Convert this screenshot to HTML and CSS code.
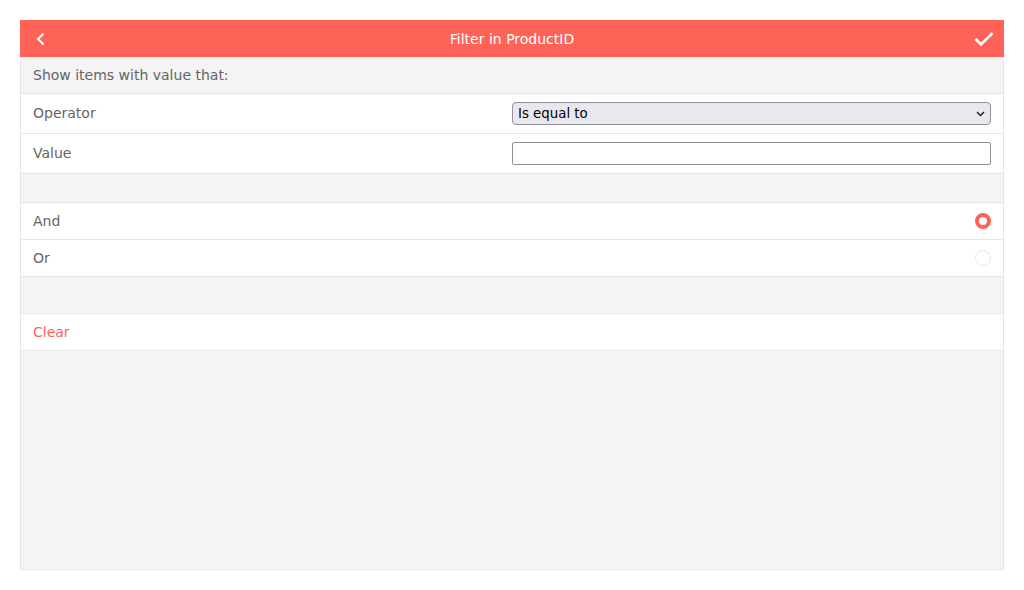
FILE: index.html
```html
<!DOCTYPE html>
<html>
<head>
<meta charset="utf-8">
<link rel="stylesheet" href="styles.css">
</head>
<body>
<div class="panel">
  <div class="header">
    <span class="hbtn back">
      <svg width="16" height="16" viewBox="0 0 16 16"><path d="M10.5 2.5 L5 8 L10.5 13.5" fill="none" stroke="#fff" stroke-width="2"/></svg>
    </span>
    <span class="title">Filter in ProductID</span>
    <span class="hbtn ok">
      <svg width="20" height="16" viewBox="0 0 20 16"><path d="M1.5 8 L7 13.5 L18.5 2" fill="none" stroke="#fff" stroke-width="2.6"/></svg>
    </span>
  </div>
  <div class="section-title">Show items with value that:</div>
  <div class="row field">
    <span class="label">Operator</span>
    <div class="control">
      <div class="select-wrap">
        <select class="select"><option>Is equal to</option></select>
        <svg class="caret" width="9" height="6" viewBox="0 0 9 6"><path d="M1 1 L4.5 4.5 L8 1" fill="none" stroke="#222" stroke-width="1.5"/></svg>
      </div>
    </div>
  </div>
  <div class="row field">
    <span class="label">Value</span>
    <div class="control"><input class="input" type="text"></div>
  </div>
  <div class="spacer small"></div>
  <div class="row">
    <span class="label">And</span>
    <span class="radio checked"></span>
  </div>
  <div class="row">
    <span class="label">Or</span>
    <span class="radio"></span>
  </div>
  <div class="spacer"></div>
  <div class="row">
    <span class="label clear">Clear</span>
  </div>
</div>
</body>
</html>
```

FILE: styles.css
```css
* { box-sizing: border-box; }
html, body { margin: 0; padding: 0; background: #fff; }
body { font-family: "DejaVu Sans", sans-serif; font-size: 14px; color: #656565; }

.panel {
  margin: 20px;
  width: 984px;
  height: 550px;
  border: 1px solid #e6e6e6;
  border-top: 0;
  background: #f4f4f4;
  display: flex;
  flex-direction: column;
}

.header {
  margin: 0 -1px;
  height: 37px;
  background: #ff6358;
  color: #fff;
  display: flex;
  align-items: center;
}
.title { flex: 1; text-align: center; line-height: 37px; padding-top: 1px; }
.hbtn { width: 44px; display: flex; align-items: center; justify-content: center; height: 37px; }
.back { justify-content: flex-start; padding-left: 13px; }
.ok { justify-content: flex-end; padding-right: 10px; }

.section-title {
  height: 37px;
  padding: 0 12px;
  display: flex;
  align-items: center;
  border-bottom: 1px solid #e6e6e6;
  background: #f4f4f4;
}

.row {
  height: 37px;
  padding: 0 12px;
  display: flex;
  align-items: center;
  justify-content: space-between;
  background: #fff;
  border-bottom: 1px solid #e6e6e6;
}
.row.field {
  height: 40px;
  display: grid;
  grid-template-columns: 1fr 1fr;
  align-items: center;
}
.row.field .label { margin-bottom: 2px; }
.control { padding-left: 3px; }

.spacer { height: 37px; border-bottom: 1px solid #e6e6e6; }
.spacer.small { height: 29px; }

.select-wrap { position: relative; width: 479px; }
.select {
  appearance: none;
  -webkit-appearance: none;
  display: block;
  width: 479px;
  height: 23px;
  margin: 0;
  padding: 0 0 0 5px;
  border: 1px solid #8f8f9d;
  border-radius: 4px;
  background: #e9e9ed;
  font-family: "DejaVu Sans", sans-serif;
  font-size: 13.33px;
  color: #000;
}
.caret { position: absolute; right: 6px; top: 9px; }

.input {
  display: block;
  width: 479px;
  height: 23px;
  margin: 0;
  padding: 0 5px;
  border: 1px solid #8f8f9d;
  border-radius: 2px;
  background: #fff;
}

.radio {
  width: 16px;
  height: 16px;
  border-radius: 50%;
  border: 1px solid #e6e6e6;
  background: #fff;
}
.radio.checked { border: 4px solid #ff6358; }

.clear { color: #ff6358; }
```
